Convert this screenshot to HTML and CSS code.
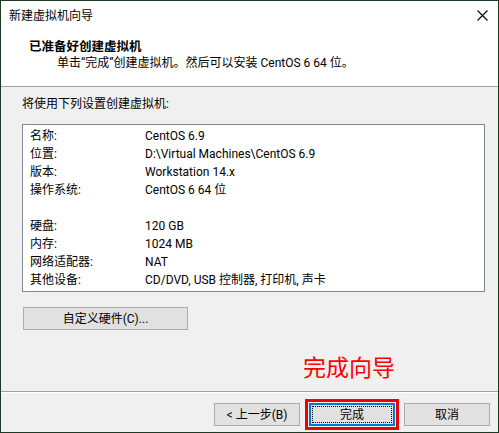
FILE: index.html
```html
<!DOCTYPE html>
<html lang="zh-CN">
<head>
    <meta charset="UTF-8">
    <title>新建虚拟机向导</title>
    <link rel="stylesheet" href="styles.css">
</head>
<body>

<div class="window">
    <div class="top">
        <div class="titlebar">
            <span class="title">新建虚拟机向导</span>
            <svg class="close" width="11" height="11" viewBox="0 0 11 11">
                <path d="M0.5 0.5 L10.5 10.5 M10.5 0.5 L0.5 10.5" stroke="#000" stroke-width="1.1" fill="none"/>
            </svg>
        </div>
        <div class="header">
            <h1>已准备好创建虚拟机</h1>
            <p>单击“完成”创建虚拟机。然后可以安装 CentOS 6 64 位。</p>
        </div>
    </div>

    <div class="content">
        <p class="intro">将使用下列设置创建虚拟机:</p>

        <div class="summary">
            <span>名称:</span><span>CentOS 6.9</span>
            <span>位置:</span><span>D:\Virtual Machines\CentOS 6.9</span>
            <span>版本:</span><span>Workstation 14.x</span>
            <span>操作系统:</span><span>CentOS 6 64 位</span>
            <span></span><span></span>
            <span>硬盘:</span><span>120 GB</span>
            <span>内存:</span><span>1024 MB</span>
            <span>网络适配器:</span><span>NAT</span>
            <span>其他设备:</span><span>CD/DVD, USB 控制器, 打印机, 声卡</span>
        </div>

        <button class="btn btn-wide">自定义硬件(C)...</button>

        <div class="note">完成向导</div>
    </div>

    <div class="footer">
        <button class="btn">&lt; 上一步(B)</button>
        <button class="btn btn-default">完成</button>
        <button class="btn">取消</button>
    </div>
</div>

</body>
</html>
```

FILE: styles.css
```css
body {
    margin: 0;
    padding: 0;
    font-family: Roboto, "Noto Sans CJK SC", sans-serif;
    font-size: 12px;
    color: #000;
}
.window {
    width: 499px;
    height: 433px;
    box-sizing: border-box;
    border: 1px solid #1c3a23;
    background-color: #f0f0f0;
    display: flex;
    flex-direction: column;
}
.top {
    background-color: #fff;
    border-bottom: 1px solid #a0a0a0;
}
.titlebar {
    height: 29px;
    display: flex;
    align-items: center;
    justify-content: space-between;
    padding: 0 10px 0 8px;
}
.title {
    line-height: 16px;
}
.close {
    display: block;
}
.header {
    padding: 9px 0 15px 28px;
}
.header h1 {
    margin: 0;
    font-size: 12.5px;
    font-weight: bold;
    line-height: 16px;
}
.header p {
    margin: 0 0 0 28px;
    line-height: 16px;
}
.content {
    flex: 1;
    padding: 9px 13px 0 21px;
    border-bottom: 1px solid #a0a0a0;
}
.intro {
    margin: 0 0 12px 0;
    line-height: 16px;
}
.summary {
    background-color: #fff;
    border: 1px solid #828790;
    padding: 2px 7px;
    height: 162px;
    display: grid;
    grid-template-columns: 115px 1fr;
    grid-auto-rows: 18px;
    align-items: center;
    line-height: 16px;
    white-space: nowrap;
}
.btn {
    font-family: inherit;
    font-size: 12px;
    color: #000;
    background-color: #e1e1e1;
    border: 1px solid #adadad;
    width: 86px;
    height: 23px;
    padding: 0;
    line-height: 16px;
}
.btn-wide {
    display: block;
    width: 165px;
    margin: 15px 0 0 1px;
}
.note {
    margin: 26px 0 0 281px;
    color: #ff0000;
    font-size: 23px;
    line-height: 25px;
}
.footer {
    height: 40px;
    box-sizing: border-box;
    border-top: 1px solid #fff;
    display: flex;
    justify-content: flex-end;
    gap: 9px;
    padding: 10px 8px 0 0;
}
.btn-default {
    position: relative;
    border: 2px solid #0078d7;
    outline: 3px solid #ee0000;
    outline-offset: 1px;
}
.btn-default::after {
    content: "";
    position: absolute;
    left: 1px;
    top: 1px;
    right: 1px;
    bottom: 1px;
    border: 1px dotted #000;
}
```
